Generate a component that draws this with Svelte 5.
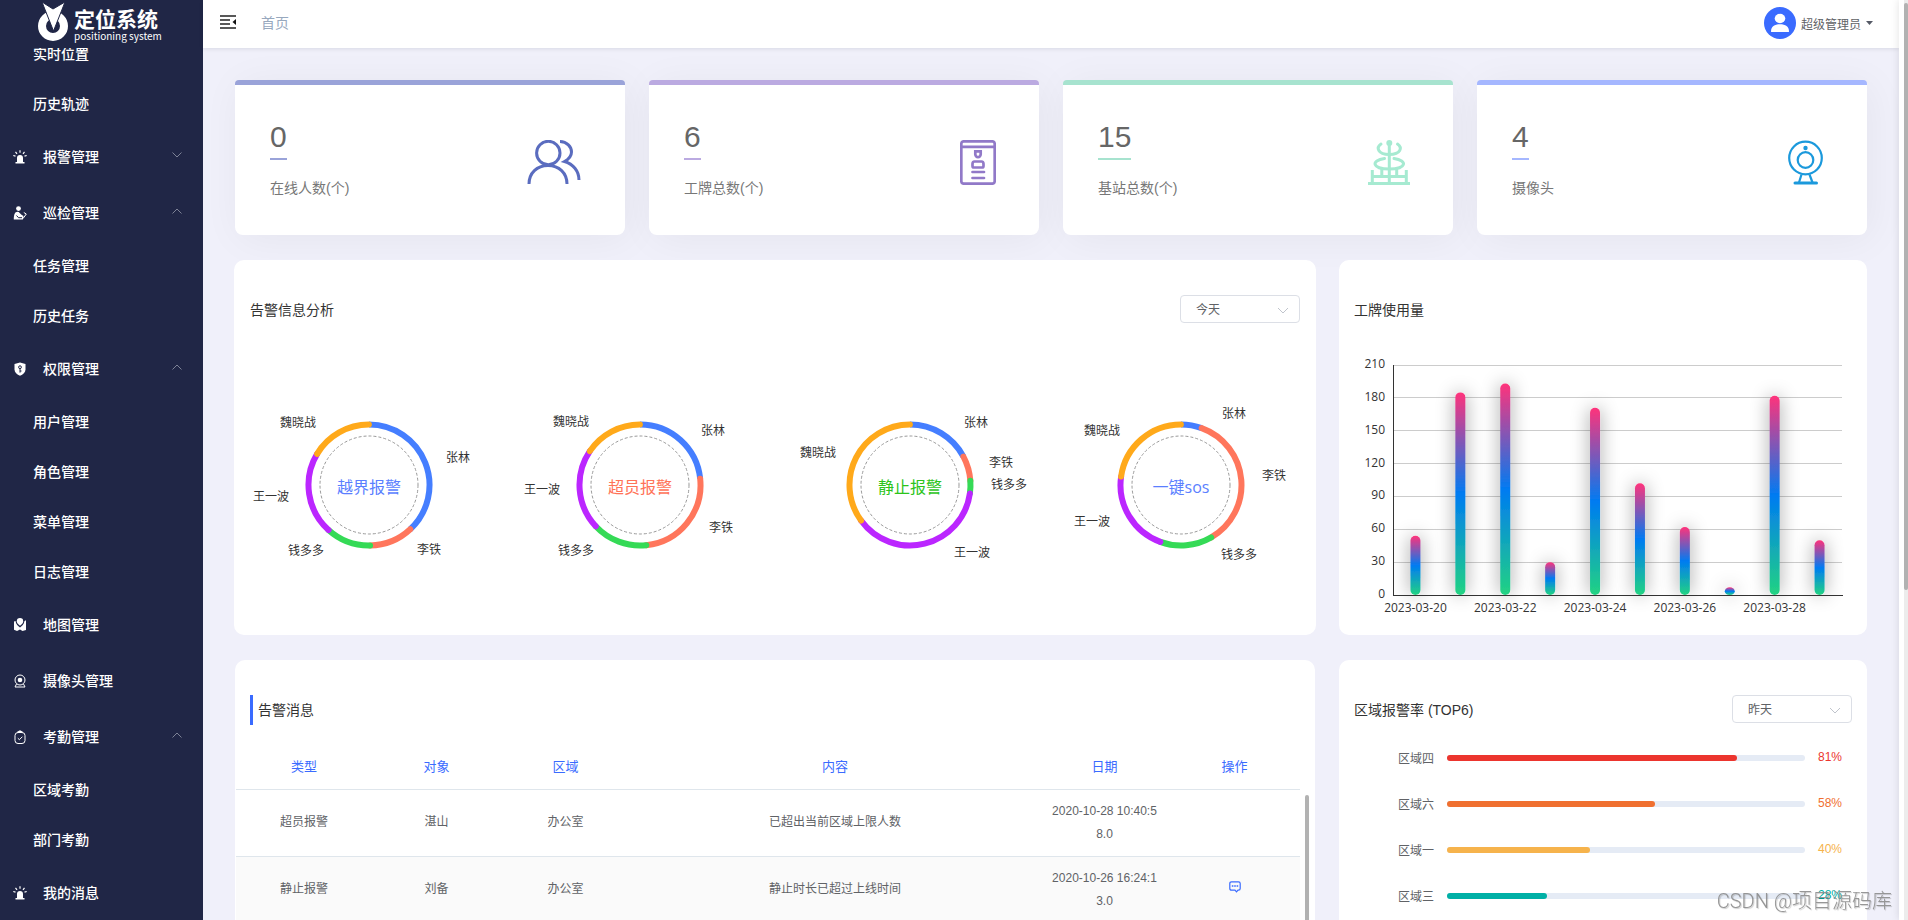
<script lang="ts">
  type MenuItem = { name: string; icon: string; open?: boolean; arrow?: boolean; children?: string[] };

  let menu: MenuItem[] = [
    { name: '报警管理', icon: 'alarm', arrow: true },
    { name: '巡检管理', icon: 'patrol', arrow: true, open: true, children: ['任务管理', '历史任务'] },
    { name: '权限管理', icon: 'shield', arrow: true, open: true, children: ['用户管理', '角色管理', '菜单管理', '日志管理'] },
    { name: '地图管理', icon: 'map' },
    { name: '摄像头管理', icon: 'camera' },
    { name: '考勤管理', icon: 'clock', arrow: true, open: true, children: ['区域考勤', '部门考勤'] },
    { name: '我的消息', icon: 'alarm' },
  ];

  function toggleMenu(idx: number) {
    menu[idx].open = !menu[idx].open;
  }

  const stats = [
    { value: 0, label: '在线人数(个)', color: '#9aa3d9', icon: 'users' },
    { value: 6, label: '工牌总数(个)', color: '#bbaae1', icon: 'badge' },
    { value: 15, label: '基站总数(个)', color: '#a7e3cf', icon: 'tower' },
    { value: 4, label: '摄像头', color: '#a5b7ff', icon: 'webcam' },
  ];

  const ringColors = ['#457eff', '#ff765c', '#35da56', '#bb26ff', '#ffa91a'];
  const names = ['张林', '李铁', '钱多多', '王一波', '魏晓战'];
  // stops: start angle of each segment, labels: [dx, dy] from the centre
  const rings = [
    { title: '越界报警', color: '#5b7fff', stops: [0, 137, 179, 222, 301], labels: [[77, -27], [48, 65], [-45, 66], [-80, 12], [-53, -62]] },
    { title: '超员报警', color: '#ff7358', stops: [0, 84, 174, 227, 304], labels: [[61, -54], [69, 43], [-46, 66], [-80, 5], [-51, -63]] },
    { title: '静止报警', color: '#2cc41a', stops: [0, 62, 86, 98, 234], labels: [[54, -62], [79, -22], [81, 0], [44, 68], [-74, -32]] },
    { title: '一键sos', color: '#5b7fff', stops: [0, 20, 150, 200, 278], labels: [[41, -71], [81, -9], [40, 70], [-71, 37], [-61, -54]] },
  ];

  function arc(from: number, to: number, r: number) {
    const point = (deg: number) => {
      const a = (deg * Math.PI) / 180;
      return `${(r * Math.sin(a)).toFixed(2)} ${(-r * Math.cos(a)).toFixed(2)}`;
    };
    return `M${point(from)}A${r} ${r} 0 ${to - from > 180 ? 1 : 0} 1 ${point(to)}`;
  }

  const usage = [54, 185, 193, 30, 171, 102, 62, 7, 182, 50];
  const ticks = [0, 30, 60, 90, 120, 150, 180, 210];
  const chart = { left: 54, right: 503, top: 30, bottom: 260 };
  const step = (chart.right - chart.left) / usage.length;
  const barX = (i: number) => chart.left + step * (i + 0.5);
  const barY = (v: number) => chart.bottom - (v / 210) * (chart.bottom - chart.top);

  const messages = [
    { type: '超员报警', target: '湛山', area: '办公室', content: '已超出当前区域上限人数', date: '2020-10-28 10:40:58.0', reply: false },
    { type: '静止报警', target: '刘备', area: '办公室', content: '静止时长已超过上线时间', date: '2020-10-26 16:24:13.0', reply: true },
  ];

  const areas = [
    { name: '区域四', rate: 81, color: '#ec352e' },
    { name: '区域六', rate: 58, color: '#f07030' },
    { name: '区域一', rate: 40, color: '#f6b34c' },
    { name: '区域三', rate: 28, color: '#00b0a6' },
  ];

  let alarmDay = '今天';
  let areaDay = '昨天';
</script>

<div class="layout">
  <aside class="sidebar">
    <div class="logo">
      <svg width="32" height="40" viewBox="0 0 32 40">
        <circle cx="16" cy="24" r="11" fill="none" stroke="#fff" stroke-width="8" />
        <path d="M5 0L16 7L28 0L16.500 29Z" fill="#fff" stroke="#202646" stroke-width="1" />
      </svg>
      <div class="logo-text">
        <strong>定位系统</strong>
        <span>positioning system</span>
      </div>
    </div>
    <nav>
      <div class="menu">
        <a class="sub" href="#position">实时位置</a>
        <a class="sub" href="#track">历史轨迹</a>
        {#each menu as item, idx}
          <button class="title" on:click={() => toggleMenu(idx)}>
            <svg class="menu-icon" width="14" height="14" viewBox="0 0 14 14">
              {#if item.icon === 'alarm'}
                <path d="M4 12V8a3 3 0 0 1 6 0v4ZM2.500 12h9v1.500h-9Z" fill="#fff" />
                <path d="M7 .3v2.400M2.500 1.800l1.500 2M11.500 1.800l-1.500 2M.3 5.500l2.200 .6M13.700 5.500l-2.200 .6" stroke="#fff" stroke-width="1.200" />
              {:else if item.icon === 'patrol'}
                <circle cx="5.500" cy="2.600" r="2.400" fill="#fff" />
                <path d="M.8 13.500C.8 8.500 2 5.800 4.500 5.800c2 0 2.500 2 4 3l2 1.200-.6 3.500Z" fill="#fff" />
                <path d="M10 12.500l3.300-4.500-2.500-1.500" fill="none" stroke="#fff" />
                <path d="M3.500 9.500l2 2.200h3.500" stroke="#202646" fill="none" />
              {:else if item.icon === 'shield'}
                <path d="M7 .5l5.500 1.500v5.500c0 3-2.500 5-5.500 6.200C4 12.500 1.500 10.500 1.500 7.500V2Z" fill="#fff" />
                <circle cx="7" cy="5.200" r="1.400" fill="none" stroke="#202646" />
                <path d="M7 6.600v4M7 9h1.500" stroke="#202646" />
              {:else if item.icon === 'map'}
                <path d="M1 3.500L2.500 3c.5 3.500 2.500 5 4.500 6.500 2-1.500 4-3 4.500-6.500l1.500-.8v9.800l-3.500 1L7 11.500 4 13l-3-1.200Z" fill="#fff" />
                <path d="M7 7.800C4.800 6 3.800 4.800 3.800 3.200a3.200 3.200 0 0 1 6.400 0c0 1.600-1 2.800-3.200 4.600Z" fill="#fff" />
              {:else if item.icon === 'camera'}
                <circle cx="7" cy="6" r="5" fill="none" stroke="#fff" />
                <circle cx="7" cy="6" r="2.300" fill="#fff" />
                <path d="M3.500 10L2 13h10l-1.500-3" fill="none" stroke="#fff" />
              {:else}
                <rect x="2" y="2.500" width="10" height="11" rx="3" fill="none" stroke="#fff" />
                <path d="M4.500 2.500L7 1l2.500 1.500" fill="none" stroke="#fff" stroke-width="1.500" />
                <path d="M4.800 8.200l1.600 1.500 3-3" fill="none" stroke="#fff" />
              {/if}
            </svg>
            <span>{item.name}</span>
            {#if item.arrow}
              <svg class="arrow" class:rotated={item.open} width="10" height="6" viewBox="0 0 10 6">
                <path d="M.5 .5L5 5L9.500 .5" fill="none" stroke="#7d8296" />
              </svg>
            {/if}
          </button>
          {#if item.open && item.children}
            {#each item.children as child}
              <a class="sub" href="#{child}">{child}</a>
            {/each}
          {/if}
        {/each}
      </div>
    </nav>
  </aside>

  <div class="main">
    <header>
      <button class="fold" aria-label="折叠菜单">
        <svg width="16" height="14" viewBox="0 0 16 14">
          <path d="M0 1h16M0 5h10M0 9h10M0 13h16" stroke="#222" stroke-width="1.500" />
          <path d="M16 4v6l-3.500-3Z" fill="#111" />
        </svg>
      </button>
      <a class="crumb" href="#home">首页</a>
      <button class="user">
        <svg width="32" height="32" viewBox="0 0 32 32">
          <circle cx="16" cy="16" r="16" fill="#3a6bff" />
          <ellipse cx="16" cy="11.500" rx="5.300" ry="4.700" fill="#fff" />
          <path d="M7 24.500C7 19.500 10.500 17.300 16 17.300S25 19.500 25 24.500Q25 25 24.300 25H7.700Q7 25 7 24.500Z" fill="#fff" />
        </svg>
        <span>超级管理员</span>
        <svg width="7" height="4" viewBox="0 0 7 4"><path d="M0 0h7L3.500 4Z" fill="#555a66" /></svg>
      </button>
    </header>

    <div class="content">
      <div class="stats">
        {#each stats as stat}
          <section class="stat" style="border-top-color: {stat.color}">
            <div>
              <div class="value" style="border-bottom-color: {stat.color}">{stat.value}</div>
              <div class="label">{stat.label}</div>
            </div>
            {#if stat.icon === 'users'}
              <svg width="55" height="45" viewBox="0 0 55 45" fill="none" stroke="#5a6cbf" stroke-width="3">
                <circle cx="21.300" cy="13" r="11.700" />
                <path d="M2 44C2 33 10 25.500 21 25.500S40 33 40 44" />
                <path d="M33 1.500C40 1.500 44.500 7 44.500 12C44.500 16.500 42 19 37.500 21.500C46 24 52 31 52 40" />
              </svg>
            {:else if stat.icon === 'badge'}
              <svg width="36" height="45" viewBox="0 0 36 45" fill="none" stroke="#9179c8" stroke-width="2.700">
                <rect x="1.300" y="1.300" width="33.400" height="42.400" rx="2.500" />
                <path d="M1 6.800h34" />
                <path d="M15.300 11.300h5.400v3c0 1.600-1.200 2.900-2.700 2.900s-2.700-1.300-2.700-2.900Z" />
                <path d="M14.500 21.500h7q2 0 2 2.500v2q0 1.500-1.500 1.500h-8q-1.500 0-1.500-1.500v-2q0-2.500 2-2.500Z" />
                <path d="M12.500 32h11.500M12.500 38h11.500" stroke-linecap="round" />
              </svg>
            {:else if stat.icon === 'tower'}
              <svg width="42" height="45" viewBox="0 0 42 45" fill="none" stroke="#a6ead1" stroke-width="3">
                <circle cx="21.300" cy="3" r="3" fill="#a6ead1" stroke="none" />
                <path d="M21.300 3v41M0 43.500h42M4.300 44V30M38.300 44V30M4.300 36.500h34M13.800 36V29M28.700 36V29" />
                <path d="M13 4C8 7.500 9.500 14.500 21.300 14.500S34.500 7.500 29.500 4" stroke-linecap="round" />
                <path d="M16.500 18.500C2.500 20.500 4 29 21.300 29S40 20.500 26 18.500" stroke-linecap="round" />
              </svg>
            {:else}
              <svg width="36" height="45" viewBox="0 0 36 45" fill="none" stroke="#1b99dc" stroke-width="2.200">
                <circle cx="17.500" cy="18" r="16.300" />
                <circle cx="17.500" cy="20" r="7.800" />
                <circle cx="17.500" cy="8" r="2.200" fill="#1b99dc" stroke="none" />
                <path d="M13.500 34.500L11 42.500M21.500 34.500L24.500 42.500" />
                <path d="M7 43h21.500" stroke-width="3" stroke-linecap="round" />
              </svg>
            {/if}
          </section>
        {/each}
      </div>

      <div class="panels">
        <section class="panel wide">
          <div class="panel-head">
            <h2>告警信息分析</h2>
            <label class="picker">
              <select bind:value={alarmDay} aria-label="告警时间">
                <option>今天</option>
                <option>昨天</option>
              </select>
              <svg width="12" height="7" viewBox="0 0 12 7"><path d="M1 1l5 5 5-5" fill="none" stroke="#c0c4cc" /></svg>
            </label>
          </div>
          <div class="rings">
            {#each rings as ring}
              <svg width="270" height="300" viewBox="-135 -150 270 300">
                {#each ring.stops as from, i}
                  <path d={arc(from, ring.stops[i + 1] ?? 359.9, 60.5)} fill="none" stroke={ringColors[i]} stroke-width="6" stroke-linecap={i === 0 ? 'butt' : 'round'} />
                {/each}
                <circle r="49" fill="none" stroke="#999" stroke-dasharray="3 2" />
                <text class="ring-title" y="8" text-anchor="middle" fill={ring.color}>{ring.title}</text>
                {#each ring.labels as [dx, dy], i}
                  <text class="ring-label" x={dx} y={dy + 4} text-anchor={dx > 0 ? 'start' : 'end'}>{names[i]}</text>
                {/each}
              </svg>
            {/each}
          </div>
        </section>

        <section class="panel">
          <div class="panel-head">
            <h2>工牌使用量</h2>
          </div>
          <svg class="bars" viewBox="0 0 528 300">
            <defs>
              <linearGradient id="barFill" x1="0" y1="0" x2="0" y2="1">
                <stop offset="0" stop-color="#ff337b" />
                <stop offset="0.5" stop-color="#007bf2" />
                <stop offset="1" stop-color="#22d382" />
              </linearGradient>
              <filter id="barShadow" filterUnits="userSpaceOnUse" x="0" y="0" width="528" height="300">
                <feDropShadow dx="0" dy="0" stdDeviation="9" flood-color="#000" flood-opacity="0.4" />
              </filter>
            </defs>
            {#each ticks as tick}
              <line x1={chart.left} x2={chart.right} y1={barY(tick)} y2={barY(tick)} stroke="#ccc" shape-rendering="crispEdges" />
              <text x="46" y={barY(tick) + 3} text-anchor="end">{tick}</text>
            {/each}
            {#each usage as value, i}
              <rect x={barX(i) - 5} y={barY(value)} width="10" height={chart.bottom - barY(value)} rx="5" fill="url(#barFill)" filter="url(#barShadow)" />
            {/each}
            <path d="M54.500 29.500V260.500H503.500" fill="none" stroke="#333" shape-rendering="crispEdges" />
            {#each ['2023-03-20', '2023-03-22', '2023-03-24', '2023-03-26', '2023-03-28'] as day, i}
              <text x={barX(i * 2)} y="277" text-anchor="middle">{day}</text>
            {/each}
          </svg>
        </section>

        <section class="panel">
          <div class="panel-head">
            <h2 class="marked">告警消息</h2>
          </div>
          <div class="table-wrap">
            <table>
              <colgroup>
                <col class="w-type" /><col class="w-std" /><col class="w-std" /><col /><col class="w-std" /><col class="w-action" />
              </colgroup>
              <thead>
                <tr>
                  <th>类型</th><th>对象</th><th>区域</th><th>内容</th><th>日期</th><th>操作</th>
                </tr>
              </thead>
              <tbody>
                {#each messages as msg}
                  <tr>
                    <td>{msg.type}</td>
                    <td>{msg.target}</td>
                    <td>{msg.area}</td>
                    <td>{msg.content}</td>
                    <td>{msg.date}</td>
                    <td>
                      {#if msg.reply}
                        <button class="reply" aria-label="回复">
                          <svg width="12" height="12" viewBox="0 0 12 12">
                            <path d="M2.500 .8h7q1.700 0 1.700 1.700v5q0 1.700-1.700 1.700H9L7.500 10.800 6 9.200H2.500Q.8 9.200 .8 7.500v-5Q.8 .8 2.500 .8Z" fill="none" stroke="#3a6bff" stroke-width="1.200" />
                            <path d="M2.800 5h1.600M5.200 5h1.600M7.600 5h1.600" stroke="#3a6bff" stroke-width="1.600" />
                          </svg>
                        </button>
                      {/if}
                    </td>
                  </tr>
                {/each}
              </tbody>
            </table>
            <div class="table-thumb"></div>
          </div>
        </section>

        <section class="panel">
          <div class="panel-head">
            <h2>区域报警率 (TOP6)</h2>
            <label class="picker">
              <select bind:value={areaDay} aria-label="区域报警时间">
                <option>今天</option>
                <option>昨天</option>
              </select>
              <svg width="12" height="7" viewBox="0 0 12 7"><path d="M1 1l5 5 5-5" fill="none" stroke="#c0c4cc" /></svg>
            </label>
          </div>
          <div class="areas">
            {#each areas as area}
              <div class="area">
                <span>{area.name}</span>
                <div class="track">
                  <div class="fill" style="width: {area.rate}%; background: {area.color}"></div>
                </div>
                <span style="color: {area.color}">{area.rate}%</span>
              </div>
            {/each}
          </div>
        </section>
      </div>
    </div>
  </div>

  <div class="scrollbar"><div class="thumb"></div></div>
  <div class="watermark">CSDN @项目源码库</div>
</div>

<style>
  :global(body) {
    margin: 0;
    font-family: "Liberation Sans", "Noto Sans CJK SC", sans-serif;
    font-size: 12px;
    color: #606266;
  }
  button {
    border: 0;
    padding: 0;
    background: none;
    font: inherit;
    color: inherit;
    cursor: pointer;
  }
  a {
    text-decoration: none;
  }
  .layout {
    display: flex;
    height: 100vh;
    overflow: hidden;
    background: #f0f0fa;
  }

  /* sidebar */
  .sidebar {
    display: flex;
    flex-direction: column;
    flex: 0 0 203px;
    background: #202646;
    color: #fff;
  }
  .logo {
    display: flex;
    align-items: center;
    gap: 5px;
    flex: 0 0 48px;
    padding-left: 37px;
    box-sizing: border-box;
  }
  .logo svg {
    margin-bottom: 4px;
  }
  .logo-text {
    display: flex;
    flex-direction: column;
    font-family: "Noto Sans CJK SC", sans-serif;
  }
  .logo-text strong {
    font-size: 21px;
    font-weight: 700;
    line-height: 24px;
  }
  .logo-text span {
    font-size: 10px;
    line-height: 12px;
    white-space: nowrap;
  }
  nav {
    flex: 1;
    overflow: hidden;
  }
  /* menu is scrolled a little under the logo */
  .menu {
    margin-top: -19px;
  }
  .sub {
    display: block;
    padding-left: 33px;
    line-height: 50px;
    font-size: 14px;
    font-weight: 500;
    color: #fff;
  }
  .title {
    display: flex;
    align-items: center;
    width: 100%;
    height: 56px;
    padding: 0 21px 0 13px;
    font-size: 14px;
    font-weight: 500;
    line-height: 20px;
  }
  .menu-icon {
    margin-right: 16px;
  }
  .arrow {
    margin-left: auto;
    margin-bottom: 4px;
  }
  .arrow.rotated {
    transform: rotate(180deg);
  }

  /* top bar */
  .main {
    display: flex;
    flex-direction: column;
    flex: 1;
    min-width: 0;
  }
  header {
    display: flex;
    align-items: center;
    flex: 0 0 48px;
    padding: 0 26px 0 17px;
    box-sizing: border-box;
    background: #fff;
    box-shadow: 0 1px 4px rgba(0, 21, 41, 0.1);
    z-index: 1;
  }
  .fold svg {
    display: block;
    margin-bottom: 4px;
  }
  .crumb {
    margin-left: 25px;
    padding-bottom: 2px;
    font-size: 14px;
    line-height: 20px;
    color: #97a8be;
  }
  .user {
    display: flex;
    align-items: center;
    gap: 5px;
    margin-left: auto;
    padding-bottom: 2px;
  }

  /* cards */
  .content {
    flex: 1;
    min-height: 0;
    padding: 32px;
    overflow-y: auto;
    scrollbar-width: none;
  }
  .stats {
    display: grid;
    grid-template-columns: repeat(4, 1fr);
    gap: 24px;
    margin-bottom: 25px;
  }
  .stat {
    display: flex;
    justify-content: space-between;
    align-items: flex-start;
    height: 155px;
    padding: 32px 43px 0 35px;
    box-sizing: border-box;
    border-top: 5px solid;
    border-radius: 4px 4px 8px 8px;
    background: #fff;
    box-shadow: 4px 4px 40px rgba(0, 0, 0, 0.05);
  }
  .stat svg {
    margin-top: 23px;
  }
  .value {
    width: fit-content;
    margin-bottom: 18px;
    padding-bottom: 1px;
    border-bottom: 2px solid;
    font-size: 30px;
    line-height: 40px;
    color: #666;
  }
  .label {
    font-size: 14px;
    line-height: 20px;
    color: #777;
  }

  /* panels */
  .panels {
    display: grid;
    grid-template-columns: 45fr 22fr;
    gap: 25px 24px;
  }
  .panel {
    min-width: 0;
    min-height: 375px;
    border-radius: 10px;
    background: #fff;
  }
  .panel-head {
    display: flex;
    justify-content: space-between;
    align-items: flex-start;
    height: 30px;
    padding: 35px 15px 0;
  }
  .wide {
    margin: 0 -1px;
  }
  .wide .panel-head {
    padding: 35px 16px 0;
  }
  h2 {
    margin: 0;
    font-size: 14px;
    font-weight: 400;
    line-height: 30px;
    color: #333;
  }
  .marked {
    padding-left: 5px;
    border-left: 3px solid #3a6bff;
  }
  .picker {
    position: relative;
    width: 120px;
  }
  .picker select {
    display: block;
    appearance: none;
    width: 100%;
    height: 28px;
    padding: 1px 15px 0;
    border: 1px solid #dcdfe6;
    border-radius: 4px;
    background: #fff;
    font: inherit;
    color: #606266;
  }
  .picker svg {
    position: absolute;
    right: 11px;
    top: 12px;
    pointer-events: none;
  }
  .rings {
    display: grid;
    grid-template-columns: repeat(4, 1fr);
    justify-items: center;
    padding-top: 10px;
    font-family: "Open Sans", "Noto Sans CJK SC", sans-serif;
  }
  .ring-title {
    font-size: 16px;
  }
  .ring-label {
    font-size: 12px;
    fill: #333;
  }
  .bars {
    display: block;
    width: 100%;
    padding-top: 10px;
    font-family: "Open Sans", "Noto Sans CJK SC", sans-serif;
  }
  .bars text {
    font-size: 12px;
    fill: #333;
  }

  .table-wrap {
    display: flex;
    gap: 5px;
    padding: 20px 6px 0 1px;
  }
  table {
    flex: 1;
    table-layout: fixed;
    border-collapse: collapse;
    text-align: center;
  }
  .w-type {
    width: 136px;
  }
  .w-std {
    width: 129px;
  }
  .w-action {
    width: 131px;
  }
  th {
    height: 44px;
    padding: 0 0 2px;
    border-bottom: 1px solid #dfe6ec;
    box-sizing: border-box;
    font-size: 13px;
    font-weight: 400;
    color: #3a6bff;
  }
  td {
    height: 67px;
    padding: 0 10px;
    border-bottom: 1px solid #dfe6ec;
    box-sizing: border-box;
    line-height: 23px;
    word-break: break-all;
  }
  tbody tr:nth-child(even) {
    background: #fafafa;
  }
  .reply svg {
    display: block;
  }
  .table-thumb {
    width: 4px;
    margin-top: 50px;
    border-radius: 2px;
    background: #b2b2b2;
  }

  .areas {
    padding: 10px 25px 0 59px;
  }
  .area {
    display: grid;
    grid-template-columns: 36px 1fr 24px;
    align-items: center;
    gap: 13px;
    height: 46px;
  }
  .area span {
    padding-bottom: 2px;
  }
  .track {
    height: 6px;
    border-radius: 3px;
    background: #e5ebf5;
  }
  .fill {
    height: 6px;
    border-radius: 3px;
  }

  /* page scrollbar */
  .scrollbar {
    flex: 0 0 4px;
    padding-top: 3px;
    border-left: 5px solid #fff;
    background: #ececec;
    box-shadow: 0 0 8px rgba(0, 0, 0, 0.12);
    z-index: 2;
  }
  .thumb {
    height: 64%;
    border-radius: 2px;
    background: #b2b2b2;
  }
  .watermark {
    position: fixed;
    right: 16px;
    bottom: 4px;
    z-index: 3;
    font-family: Roboto, "Noto Sans CJK SC", sans-serif;
    font-size: 20px;
    font-weight: 300;
    line-height: 30px;
    color: rgba(140, 140, 140, 0.9);
    text-shadow: 1px 1px 1px rgba(0, 0, 0, 0.2);
    pointer-events: none;
  }
</style>
